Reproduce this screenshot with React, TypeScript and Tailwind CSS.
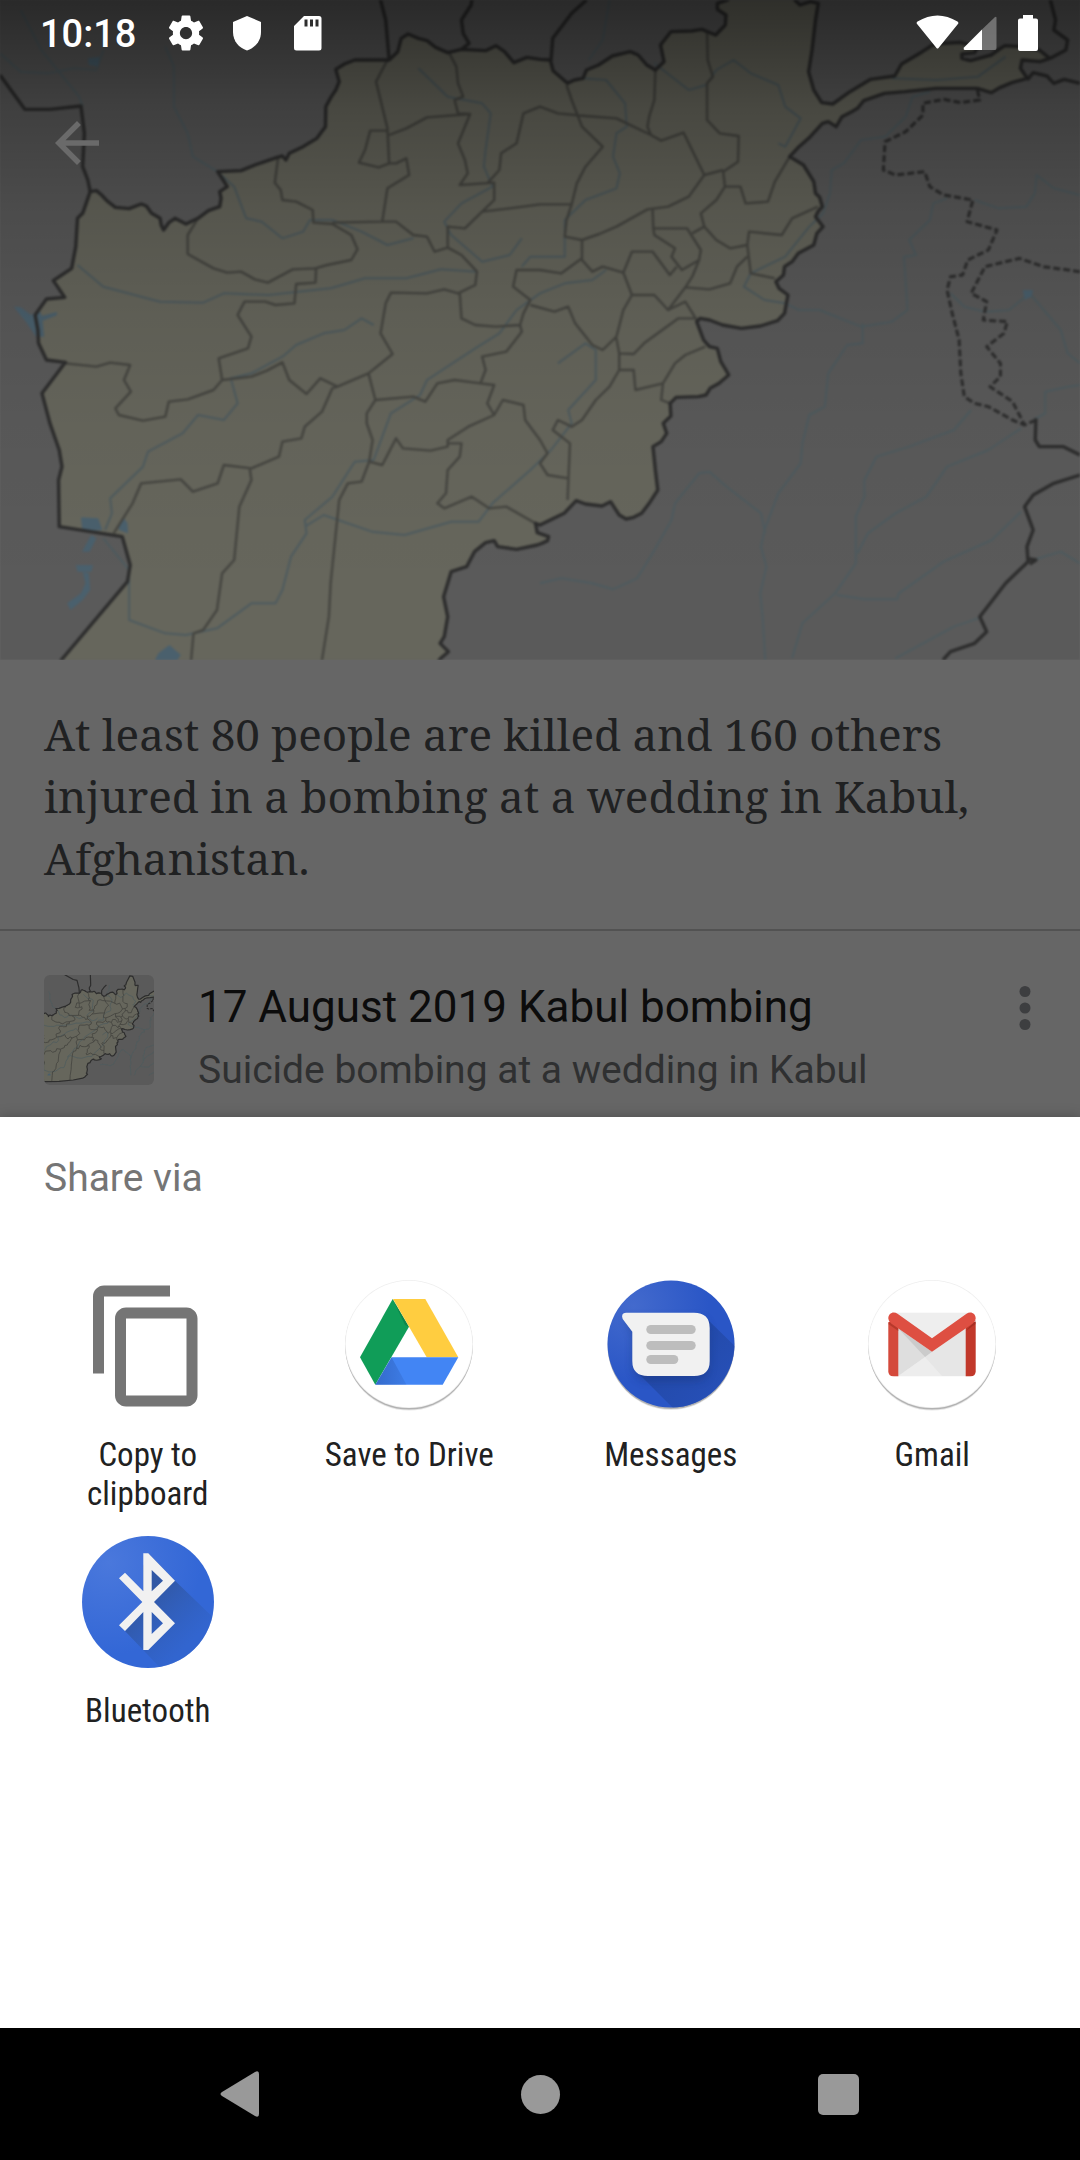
import React from "react";

const LAND =
  "M262,575 280,572 295,585 310,602 335,622 375,626 410,612 425,618 440,640 465,655 468,675 475,690 490,668 508,655 540,672 575,655 605,632 638,620 642,595 638,575 660,560 648,540 632,515 700,512 740,495 805,472 820,468 830,480 840,460 880,440 920,415 945,380 946,320 962,290 975,270 985,245 975,208 1000,192 1030,180 1130,180 1155,155 1165,115 1185,102 1215,115 1240,122 1265,142 1300,158 1340,148 1410,152 1440,137 1465,155 1492,188 1530,172 1568,178 1598,180 1606,212 1648,250 1668,240 1693,235 1703,210 1738,195 1778,168 1830,155 1853,165 1878,195 1903,210 1928,185 1918,135 1948,95 2008,93 2038,88 2078,105 2106,75 2108,45 2083,28 2083,10 2113,0 2130,-60 2200,-200 2260,-190 2310,-60 2308,0 2323,15 2353,5 2376,10 2368,60 2358,150 2348,215 2363,270 2386,308 2418,312 2468,275 2528,238 2598,228 2618,192 2678,155 2708,135 2740,130 2788,127 2838,140 2830,158 2793,162 2793,175 2818,182 2878,165 2898,150 2918,137 2968,140 3018,150 3048,175 3020,185 2968,180 2963,205 2983,235 2938,248 2905,262 2878,278 2838,265 2718,265 2628,275 2568,280 2508,302 2490,325 2473,335 2445,350 2428,380 2405,365 2388,370 2348,415 2320,440 2293,470 2333,495 2363,545 2368,580 2380,592 2388,620 2375,635 2368,650 2390,680 2372,700 2363,735 2318,760 2300,785 2278,800 2275,825 2253,845 2262,865 2288,885 2278,940 2258,962 2208,978 2153,985 2098,975 2060,960 2033,955 2023,965 2043,1020 2060,1040 2083,1045 2088,1065 2093,1085 2105,1105 2116,1125 2088,1150 2062,1165 2050,1185 2028,1190 1963,1192 1946,1210 1948,1248 1926,1270 1936,1300 1920,1325 1896,1340 1903,1410 1910,1470 1885,1510 1863,1540 1840,1552 1818,1557 1798,1545 1773,1505 1748,1518 1700,1512 1673,1502 1638,1540 1568,1575 1555,1570 1560,1598 1593,1610 1590,1622 1573,1630 1560,1635 1500,1648 1445,1640 1435,1622 1410,1628 1378,1655 1355,1700 1310,1715 1300,1750 1288,1790 1300,1850 1290,1910 1278,1930 1302,1955 1280,1975 1240,2020 1200,2040 1000,2080 700,2110 300,2120 60,2110 178,1980 370,1745 378,1695 355,1610 172,1580 170,1440 180,1400 172,1350 145,1270 122,1180 190,1087 135,1080 112,1030 110,990 102,945 135,897 188,892 155,842 208,805 220,740 225,655 240,640Z";

const PROVINCES =
  "M575,655 545,705 545,762 620,805 660,818 700,815 740,838 778,848 850,808 915,805 950,795 1020,780 1038,748 1020,705 965,672 910,668 908,630 860,605 820,600 815,570 798,548 808,470" +
  "M918,805 916,848 860,852 855,910 800,915 770,905 710,905 690,945 730,1010 720,1045 635,1075 645,1140 620,1170 545,1198 490,1205 480,1250 415,1262 345,1245 335,1225 380,1175 360,1140 378,1095 320,1088 280,1100 190,1090" +
  "M645,1140 730,1130 775,1112 820,1087 840,1140 890,1182 930,1135 980,1160 1070,1120 1140,1062 1105,1000 1120,910 1135,878 1240,880 1290,868 1330,880 1380,855 1385,815 1340,765 1300,743 1262,755 1240,710 1200,705 1150,665 1110,665 965,668" +
  "M1110,665 1125,565 1188,525 1180,475 1150,490 1130,490 1125,385 1105,300 1092,245 1125,180" +
  "M1130,490 1100,502 1042,488 1060,450 1075,392 1125,392" +
  "M1130,405 1180,385 1240,352 1365,342 1330,430 1350,480 1358,520 1335,555 1435,548 1435,600 1400,635 1350,685 1300,680 1300,743" +
  "M1400,635 1480,625 1568,613 1660,613 1675,550 1700,500 1750,440 1690,380 1660,300 1645,255" +
  "M1305,160 1325,200 1330,250 1345,290 1320,300 1330,340 1365,342" +
  "M1415,550 1450,510 1455,460 1500,430 1520,340 1568,320 1620,340 1700,348 1790,355 1890,405 1920,422 1985,398 2045,525 2100,510" +
  "M1903,210 1900,300 1885,350 1880,380 1890,405" +
  "M2053,95 2055,180 2070,230 2053,250 2053,360 2090,400 2145,408 2143,485 2100,515 2105,560" +
  "M2045,525 2000,590 1940,620 1880,628 1790,680 1740,702 1690,720 1640,710 1645,660 1660,613" +
  "M1895,628 1897,685 1995,685 2035,750 2030,780 1980,810 1950,770 1960,745 1900,705 1897,685" +
  "M2105,560 2080,600 2035,640 2045,680 2010,700" +
  "M2045,680 2080,720 2120,745 2170,735 2175,695 2270,705 2300,655 2375,620" +
  "M2105,560 2150,560 2165,610 2230,605 2250,545 2293,470" +
  "M2170,735 2180,820 2250,835M2170,770 2140,800 2120,850 2060,868 1990,862 2010,830 2030,780" +
  "M1690,720 1690,780 1720,815 1750,800 1810,818 1835,755 1895,755 1945,825 1965,800" +
  "M1810,818 1835,885 1900,885 1940,930 1990,862M1940,930 1990,905 2023,960" +
  "M1690,775 1630,820 1568,810 1500,810 1490,860 1540,900 1520,940 1510,975 1440,980 1380,975 1340,955 1335,880" +
  "M1540,915 1610,935 1650,920 1670,970 1720,1035 1750,1050 1790,1010 1810,930 1835,885" +
  "M1510,975 1515,995 1470,1055 1400,1070 1410,1110 1395,1150 1320,1140 1270,1150 1235,1205 1200,1190 1090,1200 1070,1120" +
  "M1395,1150 1435,1155 1415,1210 1435,1245 1360,1280 1300,1320 1300,1340 1250,1352 1170,1345 1150,1315 1110,1395 1072,1385 1082,1320 1065,1270 1065,1240 1090,1200" +
  "M1072,1385 1050,1445 1010,1450 985,1500 970,1650 960,1750 955,1850 935,1980 930,2080" +
  "M980,1160 965,1165 935,1235 885,1280 875,1315 820,1325 810,1370 730,1405 650,1395 632,1450 560,1475 525,1438 410,1450 385,1510 330,1600" +
  "M725,1405 730,1440 695,1520 680,1680 645,1720 630,1830 590,1890 562,1900 555,1980 545,2100" +
  "M1435,1245 1460,1200 1520,1215 1525,1260 1568,1320 1590,1360 1568,1390 1590,1425 1650,1435" +
  "M1300,1330 1340,1330 1335,1370 1300,1410 1295,1480 1270,1510 1290,1525 1370,1490 1420,1525 1470,1520 1555,1570" +
  "M1648,1500 1655,1330 1605,1290 1620,1260 1660,1280 1690,1260 1730,1200 1770,1160 1798,1110 1840,1110 1845,1170 1925,1150 1920,1200 1946,1210" +
  "M1798,1110 1798,1060 1840,1062 1870,1030 1930,985 1970,955 2023,955M1790,1015 1798,1060M1925,1150 1960,1090 1990,1065 2048,1040";

const BORDERS =
  "M0,225 72,328 145,328 235,318 245,400 240,500 255,540 262,575" +
  "M1360,-300 1370,0 1368,15 1340,60 1345,100 1362,130 1340,148" +
  "M760,-260 1000,-120 1080,-100 1120,60 1130,180" +
  "M1703,0 1660,40 1605,115 1600,180" +
  "M3050,0 3065,60 3060,90 3100,120 3095,150 3050,175" +
  "M2983,240 3000,218 3040,228 3060,250 3090,238 3136,250" +
  "M3008,1255 3006,1320 3018,1340 3088,1340 3136,1365" +
  "M3136,1425 3060,1450 3000,1485 2975,1520 3000,1590 2982,1640 2985,1685 2920,1750 2845,1850 2865,1895 2830,1930 2760,1955 2738,1980" +
  "M2980,1675 3008,1680 2990,1692";

const DISPUTED =
  "M2838,270 2845,300 2790,308 2740,298 2680,310 2680,345 2630,395 2570,425 2565,510 2600,525 2685,515 2700,560 2740,585 2825,600 2808,665 2895,690 2870,750 2810,780 2795,825 2760,830 2750,870 2765,940 2785,1020 2790,1120 2800,1190 2830,1210 2870,1220 2940,1260 2975,1275 3008,1260" +
  "M3136,815 3030,800 2960,775 2860,800 2820,880 2865,905 2855,960 2925,965 2915,1000 2865,1040 2905,1090 2905,1130 2875,1160 2940,1205 2975,1275";

const RIVERS =
  "M60,30 120,150 230,290 240,320M0,160 60,215 140,220 215,205 280,210 300,150" +
  "M480,140 505,200 505,320 545,400 560,470 632,515 680,560 715,655 760,665 820,715 880,695 900,660 965,660 1050,695 1125,735 1200,715" +
  "M225,795 300,860 465,905 590,908 650,880 780,885 960,865 1060,835 1180,835 1280,808 1385,815" +
  "M1215,205 1300,290 1400,310 1425,340 1410,450 1405,500 1430,560 1340,610 1290,665 1310,705 1400,785 1480,765 1515,715" +
  "M1515,800 1540,770 1640,770 1640,660 1700,600 1790,565 1800,520 1780,470 1790,400 1820,380 1815,310 1760,240 1690,235" +
  "M1085,975 1050,955 1000,990 940,1000 860,1035 820,1070 730,1120 670,1135 690,1210 650,1260 575,1245 530,1300 430,1355 415,1400 320,1495 325,1540 305,1590" +
  "M1760,810 1720,840 1640,850 1568,880 1500,930 1450,1000 1380,1045 1240,1140 1220,1185 1135,1240 1085,1380 1030,1385 965,1490 885,1560 890,1600 845,1670 820,1770 800,1810 730,1810 630,1885 540,1905 480,1900 375,1860 375,1710 300,1615" +
  "M885,1580 940,1545 1080,1595 1175,1605 1310,1565 1390,1565 1430,1510 1540,1410 1600,1350 1660,1270 1650,1230 1730,1140 1730,1050 1700,1030 1620,1090" +
  "M2700,275 2650,290 2630,350 2570,410 2500,420 2450,490 2415,510 2410,580 2390,640 2350,680 2280,770 2180,820 2160,860 2220,900 2280,910 2320,930 2380,930 2500,980 2590,965 2635,930 2625,770 2660,765 2640,720 2700,660 2710,610 2750,595" +
  "M2505,970 2505,1030 2460,1035 2405,1120 2395,1220 2350,1245 2330,1330 2325,1390 2260,1480 2220,1590 2210,1640 2225,1700 2208,1780 2215,1860 2222,1980" +
  "M1568,1750 1630,1735 1720,1750 1780,1768 1850,1735 1895,1660 1950,1560 1960,1510 2030,1420 2060,1415 2110,1460 2210,1540 2222,1600" +
  "M2820,1230 2770,1290 2640,1340 2545,1370 2510,1440 2510,1490 2485,1550 2485,1690 2425,1780 2330,1870 2300,1975" +
  "M2965,1285 2870,1350 2750,1400 2690,1490 2600,1540 2520,1600 2490,1660" +
  "M2965,1535 2880,1620 2740,1685 2610,1780 2605,1798 2510,1798 2430,1785M2840,1855 2770,1880 2600,1975" +
  "M2830,600 2900,625 2980,620 3005,580 3010,525 3060,565 3136,585" +
  "M2760,880 2800,920 2860,935 2930,930 2990,880 3080,990 3100,1060 3136,1090" +
  "M3000,1260 3035,1240 3035,1175 3100,1160 3136,1155M3000,1680 3080,1655 3136,1690" +
  "M1900,190 2000,270 2050,255 2080,210 2130,180 2180,220 2260,255 2280,320 2325,355 2280,440 2260,430" +
  "M2590,235 2720,240 2840,230 2920,170M1770,0 1750,120 1710,180";

const LAKES =
  "M235,1552 285,1555 297,1590 240,1595ZM345,1575 358,1552 370,1570 372,1600 345,1590ZM265,1605 280,1615 260,1655 238,1655ZM220,1695 270,1695 265,1715 225,1715ZM240,1715 258,1720 262,1770 240,1800 205,1830 195,1810 235,1780 248,1750ZM450,1980 460,1960 492,1935 525,1965 515,1980Z" +
  "M40,920 60,922 90,945 115,932 122,948 165,936 165,946 124,962 128,1010 105,1010 75,965ZM255,175 290,170 285,200 258,195ZM2970,870 3000,870 2995,890 2975,900Z";

function AfghanistanMap({
  viewBox,
  className,
  weight,
  label,
}: {
  viewBox: string;
  className: string;
  weight: number;
  label: string;
}) {
  const line = {
    fill: "none",
    strokeLinejoin: "round" as const,
    vectorEffect: "non-scaling-stroke" as const,
  };
  return (
    <svg viewBox={viewBox} preserveAspectRatio="none" className={className} role="img" aria-label={label}>
      <rect x="0" y="-400" width="3136" height="3000" fill="#5a5a5a" />
      <path d={LAND} fill="#66665c" />
      <path d={RIVERS} {...line} stroke="#4e5b5f" strokeWidth={2 * weight} />
      <path d={LAKES} fill="#4a606d" />
      <path d={PROVINCES} {...line} stroke="#454540" strokeWidth={2.4 * weight} />
      <path d={LAND} {...line} stroke="#2d2d2d" strokeWidth={3.4 * weight} />
      <path d={BORDERS} {...line} stroke="#2d2d2d" strokeWidth={3.4 * weight} />
      <path d={DISPUTED} {...line} stroke="#2d2d2d" strokeWidth={3 * weight} strokeDasharray={`${7 * weight} ${3 * weight}`} />
    </svg>
  );
}

function StatusBar() {
  return (
    <div className="flex h-[66px] items-center justify-between pr-[41px] pl-10 text-white">
      <div className="flex items-center">
        <span className="w-[97px] pt-0.5 text-[38px] leading-[48px] font-medium">10:18</span>
        <svg viewBox="0 0 24 24" className="ml-7 size-[42px]" fill="currentColor" aria-hidden="true">
          <path d="M19.43 12.98c.04-.32.07-.64.07-.98s-.03-.66-.07-.98l2.11-1.65c.19-.15.24-.42.12-.64l-2-3.46c-.12-.22-.39-.3-.61-.22l-2.49 1c-.52-.4-1.08-.73-1.69-.98l-.38-2.65C14.46 2.18 14.25 2 14 2h-4c-.25 0-.46.18-.49.42l-.38 2.65c-.61.25-1.17.59-1.69.98l-2.49-1c-.23-.09-.49 0-.61.22l-2 3.46c-.13.22-.07.49.12.64l2.11 1.65c-.04.32-.07.65-.07.98s.03.66.07.98l-2.11 1.65c-.19.15-.24.42-.12.64l2 3.46c.12.22.39.3.61.22l2.49-1c.52.4 1.08.73 1.69.98l.38 2.65c.03.24.24.42.49.42h4c.25 0 .46-.18.49-.42l.38-2.65c.61-.25 1.17-.59 1.69-.98l2.49 1c.23.09.49 0 .61-.22l2-3.46c.12-.22.07-.49-.12-.64l-2.11-1.65zM12 15.5c-1.93 0-3.5-1.57-3.5-3.5s1.57-3.5 3.5-3.5 3.5 1.57 3.5 3.5-1.57 3.5-3.5 3.5z" />
        </svg>
        <svg viewBox="0 0 30 36" className="ml-[25px] h-9 w-[30px]" fill="currentColor" aria-hidden="true">
          <path d="M15 1 29 7V17C29 26 23 33 15 35.500C7 33 1 26 1 17V7Z" />
        </svg>
        <svg viewBox="0 0 30 36" className="ml-[31px] h-9 w-[30px]" fill="currentColor" aria-hidden="true">
          <path fillRule="evenodd" d="M11 1H26Q28.500 1 28.500 3.500V33Q28.500 35.500 26 35.500H3.500Q1 35.500 1 33V11ZM11.500 4.500V11.500H14.500V4.500ZM17 4.500V11.500H20V4.500ZM22.500 4.500V11.500H25.500V4.500Z" />
        </svg>
      </div>
      <div className="flex items-center">
        <svg viewBox="0 0 43 36" className="h-9 w-[43px]" fill="currentColor" aria-hidden="true">
          <path d="M1.500 9.500Q-.3 8 1.500 6.500Q21.500-5.500 41.500 6.500Q43.300 8 41.500 9.500L22.500 33Q21.500 34 20.500 33Z" />
        </svg>
        <svg viewBox="0 0 34 36" className="ml-1 h-9 w-[34px]" fill="currentColor" aria-hidden="true">
          <path opacity=".32" d="M19 14.500 31.500 2.500Q33.500 1 33.500 3V33Q33.500 35 32 35H19Z" />
          <path d="M19 14.500V35H2Q0 35 1 32.500Z" />
        </svg>
        <svg viewBox="0 0 22 38" className="ml-5 h-[38px] w-[22px]" fill="currentColor" aria-hidden="true">
          <path d="M6 1H16V4.500H19Q21 4.500 21 6.500V35Q21 37 19 37H3Q1 37 1 35V6.500Q1 4.500 3 4.500H6Z" />
        </svg>
      </div>
    </div>
  );
}

const iconBox = "size-[132px]";

function CopyIcon() {
  return (
    <svg viewBox="0 0 24 24" className={iconBox} fill="#757575" aria-hidden="true">
      <path d="M16 1H4c-1.100 0-2 .9-2 2v14h2V3h12V1zm3 4H8c-1.100 0-2 .9-2 2v14c0 1.100.9 2 2 2h11c1.100 0 2-.9 2-2V7c0-1.100-.9-2-2-2zm0 16H8V7h11v14z" />
    </svg>
  );
}

function WhiteDisc() {
  return (
    <g>
      <circle cx="66" cy="67" r="63.500" fill="#000" opacity=".1" />
      <circle cx="66" cy="65.500" r="64" fill="#000" opacity=".22" />
      <circle cx="66" cy="64" r="64" fill="#eee" />
      <circle cx="66" cy="64" r="63.300" fill="#fff" />
    </g>
  );
}

function DriveIcon() {
  return (
    <svg viewBox="0 0 132 132" className={iconBox} aria-hidden="true">
      <defs>
        <linearGradient id="driveShade" x1="0" y1="0" x2="1" y2="0">
          <stop offset="0" stopColor="#1a3a80" stopOpacity=".35" />
          <stop offset="1" stopColor="#1a3a80" stopOpacity=".12" />
        </linearGradient>
      </defs>
      <WhiteDisc />
      <path d="M49.700 19 66 46.700 32.300 104.700 17 77.300Z" fill="#109d58" />
      <path d="M49.700 19 66 46.700 62 45Z" fill="#0b6b3c" opacity=".45" />
      <path d="M50 19H82.300L115.300 77.300H83.700Z" fill="#ffcd40" />
      <path d="M48.500 77.300H115.300L99.700 104.700H32.300Z" fill="#4285f4" />
      <path d="M48.500 77.300 63.500 104.700H32.300Z" fill="url(#driveShade)" />
    </svg>
  );
}

function MessagesIcon() {
  return (
    <svg viewBox="0 0 132 132" className={iconBox} aria-hidden="true">
      <defs>
        <radialGradient id="msgDisc" cx=".2" cy=".2" r=".6">
          <stop offset="0" stopColor="#436acd" />
          <stop offset="1" stopColor="#2a56c6" />
        </radialGradient>
        <linearGradient id="msgShade" x1="0" y1="0" x2="1" y2="1">
          <stop offset=".3" stopColor="#2146a0" stopOpacity=".8" />
          <stop offset="1" stopColor="#264fb8" stopOpacity=".6" />
        </linearGradient>
        <clipPath id="msgClip">
          <circle cx="66" cy="64" r="63.500" />
        </clipPath>
        <filter id="msgBlur" x="-20%" y="-20%" width="140%" height="150%">
          <feGaussianBlur stdDeviation="4" />
        </filter>
      </defs>
      <circle cx="66" cy="67" r="63" fill="#000" opacity=".1" />
      <circle cx="66" cy="65.500" r="63.500" fill="#000" opacity=".22" />
      <circle cx="66" cy="64" r="63.500" fill="url(#msgDisc)" />
      <g clipPath="url(#msgClip)">
        <path d="M100 37 140 76V140H80L32 92Z" fill="url(#msgShade)" />
        <path d="M20 38H92Q104 38 104 54V86Q104 101 88 101H44Q28 101 28 84V54Z" fill="#173274" opacity=".4" filter="url(#msgBlur)" />
      </g>
      <path d="M21 32.700H89Q104.700 32.700 104.700 48V81Q104.700 96 89 96H43Q27.300 96 27.300 81V51.700L17.700 39Q15.500 33 21 32.700Z" fill="#f1f1f1" />
      <g fill="#bdbdbd">
        <rect x="41.300" y="45" width="49.400" height="9" rx="4.500" />
        <rect x="41.300" y="61" width="49.400" height="9" rx="4.500" />
        <rect x="41.300" y="75" width="32" height="9" rx="4.500" />
      </g>
    </svg>
  );
}

function GmailIcon() {
  return (
    <svg viewBox="0 0 132 132" className={iconBox} aria-hidden="true">
      <WhiteDisc />
      <rect x="28" y="32.700" width="76" height="63.600" fill="#eee" />
      <path d="M32.300 48.500 66 71.700 99.700 48.500V96H32.300Z" fill="#e6e6e6" />
      <path d="M32.300 48.500 59 77 32.300 96Z" fill="#dedede" />
      <path d="M32.300 48.500 66 71.700 59 77Z" fill="#cbcbcb" />
      <path d="M32.300 96 59 77 76 96Z" fill="#ededed" />
      <path d="M22.300 42H32.300V96.300H27.300Q22.300 96.300 22.300 91.300Z" fill="#d4493b" />
      <path d="M99.700 42H109.700V91.300Q109.700 96.300 104.700 96.300H99.700Z" fill="#c1382a" />
      <path d="M22.300 44 32.300 51V48L24 41Z" fill="#a32e22" opacity=".6" />
      <path d="M99.700 51 109.700 44V40Z" fill="#8e261b" opacity=".5" />
      <path d="M22.300 38.500C22.300 33 27.500 31 31.500 33.800L66 58.300 100.500 33.800C104.500 31 109.700 33 109.700 38.500Q109.700 41.500 106.500 43.800L66 71.700 25.500 43.800Q22.300 41.500 22.300 38.500Z" fill="#de4f42" />
    </svg>
  );
}

function BluetoothIcon() {
  return (
    <svg viewBox="0 0 132 132" className={iconBox} aria-hidden="true">
      <defs>
        <radialGradient id="btDisc" cx=".2" cy=".2" r=".7">
          <stop offset="0" stopColor="#4a78dc" />
          <stop offset="1" stopColor="#3367d6" />
        </radialGradient>
        <linearGradient id="btShade" gradientUnits="userSpaceOnUse" x1="66" y1="60" x2="110" y2="105">
          <stop offset="0" stopColor="#2f559f" stopOpacity=".9" />
          <stop offset="1" stopColor="#3163c8" stopOpacity=".5" />
        </linearGradient>
        <clipPath id="btClip">
          <circle cx="66" cy="66" r="66" />
        </clipPath>
      </defs>
      <circle cx="66" cy="66" r="66" fill="url(#btDisc)" />
      <g clipPath="url(#btClip)">
        <path d="M66.300 17.300 93 44.700 140 90V140H86L43 95 61.300 76V30Z" fill="url(#btShade)" />
      </g>
      <path
        fillRule="evenodd"
        fill="#f1f1f1"
        d="M61.300 17.300H66.300L93 44.700 72 66 93 87.300 66.300 114H61.300V76L43 95 37 89.300 60.300 66 37 42.300 43 36.700 61.300 55.300ZM69.700 34V55.300L81 44.700ZM69.700 76V98L81 87.300Z"
      />
    </svg>
  );
}

const TARGETS = [
  { name: "Copy to clipboard", Icon: CopyIcon },
  { name: "Save to Drive", Icon: DriveIcon },
  { name: "Messages", Icon: MessagesIcon },
  { name: "Gmail", Icon: GmailIcon },
  { name: "Bluetooth", Icon: BluetoothIcon },
];

export default function App() {
  return (
    <div className="flex min-h-screen flex-col bg-[#666] font-['Roboto',sans-serif]">
      <header className="relative h-[660px] overflow-hidden">
        <AfghanistanMap
          viewBox="0 0 3136 1980"
          className="absolute inset-0 h-full w-full blur-[1px]"
          weight={1}
          label="Map of Afghanistan"
        />
        <div className="absolute inset-0 bg-[linear-gradient(to_bottom,rgba(0,0,0,0.54)_0%,rgba(0,0,0,0.3)_16%,rgba(0,0,0,0.16)_32%,rgba(0,0,0,0.08)_48%,rgba(0,0,0,0.03)_65%,transparent_90%)]" />
        <div className="relative">
          <StatusBar />
          <button type="button" aria-label="Navigate up" className="mt-11 ml-11 block text-[#6a6a6a]">
            <svg viewBox="0 0 24 24" className="size-[66px]" fill="currentColor" aria-hidden="true">
              <path d="M20 11H7.830l5.590-5.590L12 4l-8 8 8 8 1.410-1.410L7.830 13H20v-2z" />
            </svg>
          </button>
        </div>
      </header>

      <main>
        <p className="border-b-2 border-[#525252] px-11 pt-[43px] pb-10 font-['Noto_Serif','DejaVu_Serif',serif] text-[44px] leading-[62px] text-[#202122]">
          At least 80 people are killed and 160 others injured in a bombing at a wedding in Kabul, Afghanistan.
        </p>
        <article className="flex items-start px-11 pt-11 pb-[22px]">
          <AfghanistanMap
            viewBox="380 -219 2332 2409"
            className="size-[110px] shrink-0 rounded-md"
            weight={0.35}
            label="Map of Afghanistan, thumbnail"
          />
          <div className="ml-11 min-w-0 flex-1">
            <h2 className="mt-1 text-[44px] leading-[56px] text-[#0c0c0c]">17 August 2019 Kabul bombing</h2>
            <p className="mt-2.5 text-[39px] leading-[50px] text-[#2f3031]">Suicide bombing at a wedding in Kabul</p>
          </div>
          <button type="button" aria-label="More options" className="-mr-[22px] text-[#3d3e40]">
            <svg viewBox="0 0 24 24" className="size-[66px]" fill="currentColor" aria-hidden="true">
              <circle cx="12" cy="6" r="2" />
              <circle cx="12" cy="12" r="2" />
              <circle cx="12" cy="18" r="2" />
            </svg>
          </button>
        </article>
      </main>

      <section role="dialog" aria-labelledby="share-title" className="flex-1 bg-white shadow-[0_0_12px_rgba(0,0,0,0.25)]">
        <h1 id="share-title" className="px-11 pt-9 text-[39px] leading-[50px] text-[#757575]">
          Share via
        </h1>
        <ul className="grid grid-cols-4 gap-y-[23px] px-[17px] pt-[77px]">
          {TARGETS.map(({ name, Icon }) => (
            <li key={name} className="flex justify-center">
              <button type="button" className="flex w-44 flex-col items-center gap-[23px]">
                <Icon />
                <span className="text-center font-['Roboto_Condensed','Roboto',sans-serif] text-[33px] leading-[39px] text-[#212121]">
                  {name}
                </span>
              </button>
            </li>
          ))}
        </ul>
      </section>

      <nav aria-label="System" className="grid h-[132px] grid-cols-3 bg-black px-[93px] text-[#999]">
        <button type="button" aria-label="Back" className="flex items-center justify-center">
          <svg viewBox="0 0 44 48" className="h-12 w-11" fill="currentColor" aria-hidden="true">
            <path d="M2 22 35 2Q39 0 39 4V44Q39 48 35 46L2 26Q-1 24 2 22Z" />
          </svg>
        </button>
        <button type="button" aria-label="Home" className="flex items-center justify-center">
          <span className="size-[39px] rounded-full bg-[#999]" />
        </button>
        <button type="button" aria-label="Recent apps" className="flex items-center justify-center">
          <span className="size-[41px] rounded-[5px] bg-[#999]" />
        </button>
      </nav>
    </div>
  );
}
